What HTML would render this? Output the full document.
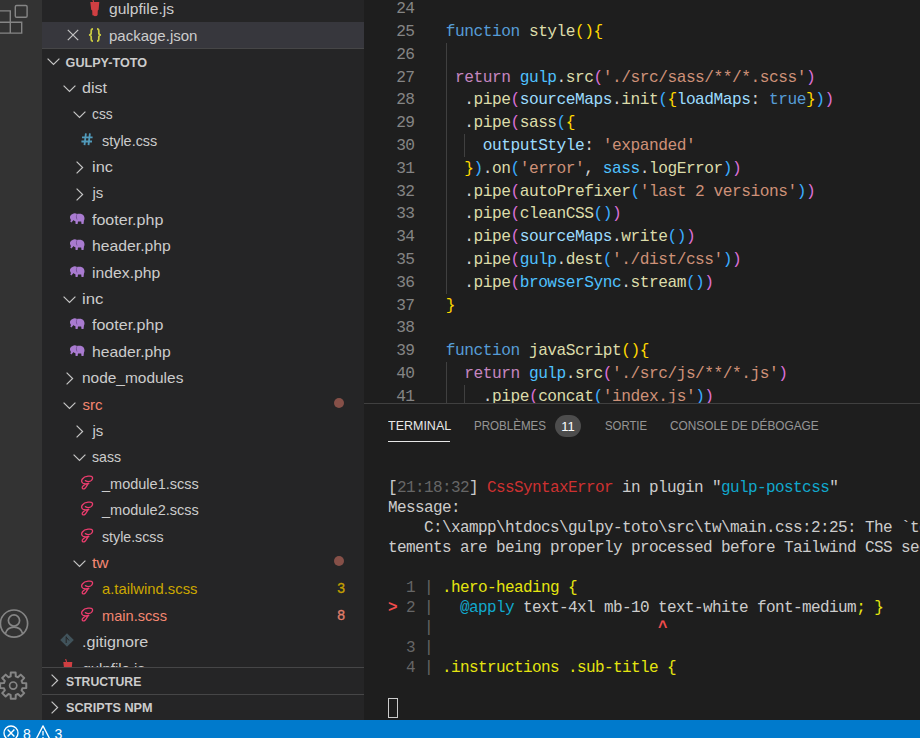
<!DOCTYPE html><html><head><meta charset="utf-8"><style>
*{margin:0;padding:0;box-sizing:border-box}
html,body{width:920px;height:738px;overflow:hidden;background:#1e1e1e}
body{position:relative;font-family:"Liberation Sans",sans-serif}
.abs{position:absolute}
#act{left:0;top:0;width:42px;height:720px;background:#333333;overflow:hidden}
#side{left:42px;top:0;width:322px;height:720px;background:#252526;overflow:hidden}
.row{position:absolute;left:0;width:322px;height:26.4px;font-size:15px;color:#cccccc;white-space:nowrap}
.t{position:absolute;top:1px;line-height:26.4px;white-space:nowrap}
.ic{position:absolute}
#editor{left:364px;top:0;width:556px;height:403px;background:#1e1e1e;overflow:hidden}
.ln{position:absolute;left:0;width:50.6px;text-align:right;color:#858585;font-family:"Liberation Mono",monospace;font-size:16.2px;letter-spacing:-0.48px;line-height:22.8px;height:22.8px;white-space:pre}
.cl{position:absolute;left:81.8px;font-family:"Liberation Mono",monospace;font-size:16.2px;letter-spacing:-0.48px;line-height:22.8px;height:22.8px;white-space:pre;color:#d4d4d4}
.ig{position:absolute;width:1px;background:#404040}
#panel{left:364px;top:403px;width:556px;height:317px;background:#1e1e1e;border-top:1px solid rgba(128,128,128,0.35);overflow:hidden}
.tab{position:absolute;top:0;font-size:13px;line-height:26px;color:rgba(231,231,231,0.6);white-space:nowrap}
.term{position:absolute;left:24px;font-family:"Liberation Mono",monospace;font-size:16px;letter-spacing:-0.6px;line-height:20px;height:20px;white-space:pre;color:#cccccc}
#status{left:0;top:720px;width:920px;height:18px;background:#007acc;overflow:hidden}
.k{color:#569cd6}.c{color:#c586c0}.f{color:#dcdcaa}.v{color:#9cdcfe}.o{color:#4fc1ff}.s{color:#ce9178}
.tw{color:#cccccc}.tg{color:#666666}.tr{color:#cd3131}.tR{color:#f14c4c;font-weight:bold}.tc{color:#11a8cd}.ty{color:#e5e510}
.b1{color:#ffd700}.b2{color:#da70d6}.b3{color:#3aacff}
</style></head><body>
<div id="act" class="abs"><svg class="ic" style="left:0;top:0" width="42" height="40" viewBox="0 0 42 40"><g fill="none" stroke="#858585" stroke-width="1.4"><rect x="15.3" y="5.5" width="11.8" height="11.8" rx="1.3"/><path d="M-2,10.9 L10.3,10.9 L10.3,22.3 L21.7,22.3 L21.7,33.1 L-2,33.1 M10.3,22.3 L10.3,33.1 M-2,22.3 L10.3,22.3"/></g></svg><svg class="ic" style="left:0;top:600px" width="42" height="110" viewBox="0 600 42 110"><g fill="none" stroke="#858585" stroke-width="1.7"><circle cx="14" cy="623.6" r="13.6"/><circle cx="14" cy="620.5" r="5.6"/><path d="M5.2,634 C6.5,629.5 10,627.2 14,627.2 C18,627.2 21.5,629.5 22.8,634"/><path d="M22.45,683.03 L26.28,683.18 L26.28,688.02 L22.45,688.17 L21.56,690.33 L24.16,693.13 L20.73,696.56 L17.93,693.96 L15.77,694.85 L15.62,698.68 L10.78,698.68 L10.63,694.85 L8.47,693.96 L5.67,696.56 L2.24,693.13 L4.84,690.33 L3.95,688.17 L0.12,688.02 L0.12,683.18 L3.95,683.03 L4.84,680.87 L2.24,678.07 L5.67,674.64 L8.47,677.24 L10.63,676.35 L10.78,672.52 L15.62,672.52 L15.77,676.35 L17.93,677.24 L20.73,674.64 L24.16,678.07 L21.56,680.87 Z" stroke-linejoin="round" stroke-width="2"/><circle cx="13.2" cy="685.6" r="3.6"/></g></svg></div>
<div id="side" class="abs">
<div class="row" style="top:-4.8px;"><span class="t" style="left:67px;transform:scaleX(1.04);transform-origin:0 0">gulpfile.js</span><svg class="ic" style="left:47.5px;top:3.8000000000000007px" width="10" height="18" viewBox="0 0 10 18"><path d="M2.6,0 L3.6,3" stroke="#cf3f42" stroke-width="1.1"/><path d="M0.3,3 L9.3,3 L8.6,10.8 L7.8,11.6 L7.6,16 C6.5,17.6 3.6,17.6 2.4,16 L2.2,11.6 L1.2,10.8 Z" fill="#cf3f42"/></svg></div>
<div class="row" style="top:21.6px;background:#37373d"><span class="t" style="left:67px">package.json</span><svg class="ic" style="left:25px;top:7.2px" width="12" height="12" viewBox="0 0 12 12"><path d="M0.8,0.8 L11.2,11.2 M11.2,0.8 L0.8,11.2" stroke="#c5c5c5" stroke-width="1.2"/></svg><svg class="ic" style="left:45.5px;top:6px" width="14" height="14" viewBox="0 0 14 14"><path d="M5,0.9 C3.6,0.9 3.2,1.5 3.2,3 L3.2,5 C3.2,6.1 2.4,6.9 1,7 C2.4,7.1 3.2,7.9 3.2,9 L3.2,11 C3.2,12.5 3.6,13.1 5,13.1 M9,0.9 C10.4,0.9 10.8,1.5 10.8,3 L10.8,5 C10.8,6.1 11.6,6.9 13,7 C11.6,7.1 10.8,7.9 10.8,9 L10.8,11 C10.8,12.5 10.4,13.1 9,13.1" fill="none" stroke="#cbcb41" stroke-width="1.7"/></svg></div>
<div class="abs" style="left:0;top:48px;width:322px;height:1px;background:rgba(204,204,204,0.2)"></div>
<div class="abs" style="left:0;top:0;width:322px;height:667px;overflow:hidden">
<div class="row" style="top:48.4px;"><span class="t" style="left:23.599999999999994px;font-weight:bold;font-size:12.6px;top:1.5px">GULPY-TOTO</span><svg class="ic" style="left:4.799999999999997px;top:9.8px" width="13" height="8" viewBox="0 0 13 8"><polyline points="0.6,0.6 6.5,6.5 12.4,0.6" fill="none" stroke="#c5c5c5" stroke-width="1.2"/></svg></div>
<div class="row" style="top:73.7px;"><span class="t" style="left:40.400000000000006px;color:#cccccc;transform:scaleX(1.074);transform-origin:0 0">dist</span><svg class="ic" style="left:20.5px;top:11.1px" width="13" height="8" viewBox="0 0 13 8"><polyline points="0.6,0.6 6.5,6.5 12.4,0.6" fill="none" stroke="#c5c5c5" stroke-width="1.2"/></svg></div>
<div class="row" style="top:100.1px;"><span class="t" style="left:50.400000000000006px;color:#cccccc;transform:scaleX(0.918);transform-origin:0 0">css</span><svg class="ic" style="left:30.5px;top:11.1px" width="13" height="8" viewBox="0 0 13 8"><polyline points="0.6,0.6 6.5,6.5 12.4,0.6" fill="none" stroke="#c5c5c5" stroke-width="1.2"/></svg></div>
<div class="row" style="top:126.5px;"><span class="t" style="left:60px;color:#cccccc;transform:scaleX(0.961);transform-origin:0 0">style.css</span><svg class="ic" style="left:38.5px;top:6.3999999999999995px" width="13" height="13" viewBox="0 0 13 13"><path d="M4.9,0.4 L3.5,12.2 M8.9,0.4 L7.5,12.2 M1,4.3 L11.6,4.3 M0.4,8.5 L11,8.5" fill="none" stroke="#519aba" stroke-width="1.8"/></svg></div>
<div class="row" style="top:152.89999999999998px;"><span class="t" style="left:50.400000000000006px;color:#cccccc;transform:scaleX(1.089);transform-origin:0 0">inc</span><svg class="ic" style="left:33.8px;top:8.399999999999999px" width="8" height="13" viewBox="0 0 8 13"><polyline points="0.6,0.6 6.6,6.5 0.6,12.4" fill="none" stroke="#c5c5c5" stroke-width="1.2"/></svg></div>
<div class="row" style="top:179.3px;"><span class="t" style="left:50.400000000000006px;color:#cccccc;transform:scaleX(1.000);transform-origin:0 0">js</span><svg class="ic" style="left:33.8px;top:8.399999999999999px" width="8" height="13" viewBox="0 0 8 13"><polyline points="0.6,0.6 6.6,6.5 0.6,12.4" fill="none" stroke="#c5c5c5" stroke-width="1.2"/></svg></div>
<div class="row" style="top:205.7px;"><span class="t" style="left:50.400000000000006px;color:#cccccc;transform:scaleX(1.069);transform-origin:0 0">footer.php</span><svg class="ic" style="left:27.400000000000006px;top:7.199999999999999px" width="16" height="12" viewBox="0 0 16 12"><path d="M3.5,1 C5,0 7,0.3 8,1 C9,0.6 11.5,0.5 13,1.2 C15,2 15.6,4 15.5,6 L15,7.5 L14.5,11 L12.5,11 L12.2,8.5 L9,8.5 L8.6,11 L6.6,11 L6.4,8.2 C5.5,8 4.8,7.6 4.5,7 C4,8 3,8.6 2.5,9.4 L1.2,8.6 C1.8,7.8 2.2,7 1.5,6 C0.6,4.6 0.8,2 3.5,1 Z" fill="#a97bd0"/><path d="M8,1.2 C7.2,2.5 7.2,5 8,6.5" fill="none" stroke="#6b4a8a" stroke-width="0.8"/></svg></div>
<div class="row" style="top:232.09999999999997px;"><span class="t" style="left:50.400000000000006px;color:#cccccc;transform:scaleX(1.050);transform-origin:0 0">header.php</span><svg class="ic" style="left:27.400000000000006px;top:7.199999999999999px" width="16" height="12" viewBox="0 0 16 12"><path d="M3.5,1 C5,0 7,0.3 8,1 C9,0.6 11.5,0.5 13,1.2 C15,2 15.6,4 15.5,6 L15,7.5 L14.5,11 L12.5,11 L12.2,8.5 L9,8.5 L8.6,11 L6.6,11 L6.4,8.2 C5.5,8 4.8,7.6 4.5,7 C4,8 3,8.6 2.5,9.4 L1.2,8.6 C1.8,7.8 2.2,7 1.5,6 C0.6,4.6 0.8,2 3.5,1 Z" fill="#a97bd0"/><path d="M8,1.2 C7.2,2.5 7.2,5 8,6.5" fill="none" stroke="#6b4a8a" stroke-width="0.8"/></svg></div>
<div class="row" style="top:258.5px;"><span class="t" style="left:50.400000000000006px;color:#cccccc;transform:scaleX(1.050);transform-origin:0 0">index.php</span><svg class="ic" style="left:27.400000000000006px;top:7.199999999999999px" width="16" height="12" viewBox="0 0 16 12"><path d="M3.5,1 C5,0 7,0.3 8,1 C9,0.6 11.5,0.5 13,1.2 C15,2 15.6,4 15.5,6 L15,7.5 L14.5,11 L12.5,11 L12.2,8.5 L9,8.5 L8.6,11 L6.6,11 L6.4,8.2 C5.5,8 4.8,7.6 4.5,7 C4,8 3,8.6 2.5,9.4 L1.2,8.6 C1.8,7.8 2.2,7 1.5,6 C0.6,4.6 0.8,2 3.5,1 Z" fill="#a97bd0"/><path d="M8,1.2 C7.2,2.5 7.2,5 8,6.5" fill="none" stroke="#6b4a8a" stroke-width="0.8"/></svg></div>
<div class="row" style="top:284.9px;"><span class="t" style="left:40.400000000000006px;color:#cccccc;transform:scaleX(1.117);transform-origin:0 0">inc</span><svg class="ic" style="left:20.5px;top:11.1px" width="13" height="8" viewBox="0 0 13 8"><polyline points="0.6,0.6 6.5,6.5 12.4,0.6" fill="none" stroke="#c5c5c5" stroke-width="1.2"/></svg></div>
<div class="row" style="top:311.3px;"><span class="t" style="left:50.400000000000006px;color:#cccccc;transform:scaleX(1.069);transform-origin:0 0">footer.php</span><svg class="ic" style="left:27.400000000000006px;top:7.199999999999999px" width="16" height="12" viewBox="0 0 16 12"><path d="M3.5,1 C5,0 7,0.3 8,1 C9,0.6 11.5,0.5 13,1.2 C15,2 15.6,4 15.5,6 L15,7.5 L14.5,11 L12.5,11 L12.2,8.5 L9,8.5 L8.6,11 L6.6,11 L6.4,8.2 C5.5,8 4.8,7.6 4.5,7 C4,8 3,8.6 2.5,9.4 L1.2,8.6 C1.8,7.8 2.2,7 1.5,6 C0.6,4.6 0.8,2 3.5,1 Z" fill="#a97bd0"/><path d="M8,1.2 C7.2,2.5 7.2,5 8,6.5" fill="none" stroke="#6b4a8a" stroke-width="0.8"/></svg></div>
<div class="row" style="top:337.7px;"><span class="t" style="left:50.400000000000006px;color:#cccccc;transform:scaleX(1.050);transform-origin:0 0">header.php</span><svg class="ic" style="left:27.400000000000006px;top:7.199999999999999px" width="16" height="12" viewBox="0 0 16 12"><path d="M3.5,1 C5,0 7,0.3 8,1 C9,0.6 11.5,0.5 13,1.2 C15,2 15.6,4 15.5,6 L15,7.5 L14.5,11 L12.5,11 L12.2,8.5 L9,8.5 L8.6,11 L6.6,11 L6.4,8.2 C5.5,8 4.8,7.6 4.5,7 C4,8 3,8.6 2.5,9.4 L1.2,8.6 C1.8,7.8 2.2,7 1.5,6 C0.6,4.6 0.8,2 3.5,1 Z" fill="#a97bd0"/><path d="M8,1.2 C7.2,2.5 7.2,5 8,6.5" fill="none" stroke="#6b4a8a" stroke-width="0.8"/></svg></div>
<div class="row" style="top:364.09999999999997px;"><span class="t" style="left:40.400000000000006px;color:#cccccc;transform:scaleX(1.030);transform-origin:0 0">node_modules</span><svg class="ic" style="left:23.8px;top:8.399999999999999px" width="8" height="13" viewBox="0 0 8 13"><polyline points="0.6,0.6 6.6,6.5 0.6,12.4" fill="none" stroke="#c5c5c5" stroke-width="1.2"/></svg></div>
<div class="row" style="top:390.49999999999994px;"><span class="t" style="left:40.400000000000006px;color:#f48771;transform:scaleX(1.000);transform-origin:0 0">src</span><svg class="ic" style="left:20.5px;top:11.1px" width="13" height="8" viewBox="0 0 13 8"><polyline points="0.6,0.6 6.5,6.5 12.4,0.6" fill="none" stroke="#c5c5c5" stroke-width="1.2"/></svg><div class="ic" style="left:292px;top:7.199999999999999px;width:10px;height:10px;border-radius:50%;background:rgb(134,80,72)"></div></div>
<div class="row" style="top:416.9px;"><span class="t" style="left:50.400000000000006px;color:#cccccc;transform:scaleX(1.000);transform-origin:0 0">js</span><svg class="ic" style="left:33.8px;top:8.399999999999999px" width="8" height="13" viewBox="0 0 8 13"><polyline points="0.6,0.6 6.6,6.5 0.6,12.4" fill="none" stroke="#c5c5c5" stroke-width="1.2"/></svg></div>
<div class="row" style="top:443.29999999999995px;"><span class="t" style="left:50.400000000000006px;color:#cccccc;transform:scaleX(0.940);transform-origin:0 0">sass</span><svg class="ic" style="left:30.5px;top:11.1px" width="13" height="8" viewBox="0 0 13 8"><polyline points="0.6,0.6 6.5,6.5 12.4,0.6" fill="none" stroke="#c5c5c5" stroke-width="1.2"/></svg></div>
<div class="row" style="top:469.7px;"><span class="t" style="left:60px;color:#cccccc;transform:scaleX(0.967);transform-origin:0 0">_module1.scss</span><svg class="ic" style="left:38px;top:5.199999999999999px" width="15" height="16" viewBox="0 0 15 16"><path d="M5.4,5.6 C7,6.6 9,6.8 10.6,6 C12.4,5 13,3 12.2,1.8 C11.4,0.8 9.5,1 8,1.2 C5.5,1.5 3.4,2.6 2.4,4 C1.4,5.4 1.6,7.2 3,8.2 C4.6,9.1 7,8.8 8.8,8.5 M8.2,8.7 C7.2,9.8 6.6,11.5 5.6,12.6 C4.8,13.7 3.4,14.4 2.6,13.6 C1.8,12.8 2.4,11.4 3.6,10.4 C4.8,9.4 6.5,8.8 8,8.6" fill="none" stroke="#ec3d6e" stroke-width="1.3" stroke-linecap="round"/></svg></div>
<div class="row" style="top:496.09999999999997px;"><span class="t" style="left:60px;color:#cccccc;transform:scaleX(0.967);transform-origin:0 0">_module2.scss</span><svg class="ic" style="left:38px;top:5.199999999999999px" width="15" height="16" viewBox="0 0 15 16"><path d="M5.4,5.6 C7,6.6 9,6.8 10.6,6 C12.4,5 13,3 12.2,1.8 C11.4,0.8 9.5,1 8,1.2 C5.5,1.5 3.4,2.6 2.4,4 C1.4,5.4 1.6,7.2 3,8.2 C4.6,9.1 7,8.8 8.8,8.5 M8.2,8.7 C7.2,9.8 6.6,11.5 5.6,12.6 C4.8,13.7 3.4,14.4 2.6,13.6 C1.8,12.8 2.4,11.4 3.6,10.4 C4.8,9.4 6.5,8.8 8,8.6" fill="none" stroke="#ec3d6e" stroke-width="1.3" stroke-linecap="round"/></svg></div>
<div class="row" style="top:522.5px;"><span class="t" style="left:60px;color:#cccccc;transform:scaleX(0.946);transform-origin:0 0">style.scss</span><svg class="ic" style="left:38px;top:5.199999999999999px" width="15" height="16" viewBox="0 0 15 16"><path d="M5.4,5.6 C7,6.6 9,6.8 10.6,6 C12.4,5 13,3 12.2,1.8 C11.4,0.8 9.5,1 8,1.2 C5.5,1.5 3.4,2.6 2.4,4 C1.4,5.4 1.6,7.2 3,8.2 C4.6,9.1 7,8.8 8.8,8.5 M8.2,8.7 C7.2,9.8 6.6,11.5 5.6,12.6 C4.8,13.7 3.4,14.4 2.6,13.6 C1.8,12.8 2.4,11.4 3.6,10.4 C4.8,9.4 6.5,8.8 8,8.6" fill="none" stroke="#ec3d6e" stroke-width="1.3" stroke-linecap="round"/></svg></div>
<div class="row" style="top:548.9px;"><span class="t" style="left:50.400000000000006px;color:#f48771;transform:scaleX(1.106);transform-origin:0 0">tw</span><svg class="ic" style="left:30.5px;top:11.1px" width="13" height="8" viewBox="0 0 13 8"><polyline points="0.6,0.6 6.5,6.5 12.4,0.6" fill="none" stroke="#c5c5c5" stroke-width="1.2"/></svg><div class="ic" style="left:292px;top:7.199999999999999px;width:10px;height:10px;border-radius:50%;background:rgb(134,80,72)"></div></div>
<div class="row" style="top:575.3px;"><span class="t" style="left:60px;color:#cca700;transform:scaleX(0.987);transform-origin:0 0">a.tailwind.scss</span><svg class="ic" style="left:38px;top:5.199999999999999px" width="15" height="16" viewBox="0 0 15 16"><path d="M5.4,5.6 C7,6.6 9,6.8 10.6,6 C12.4,5 13,3 12.2,1.8 C11.4,0.8 9.5,1 8,1.2 C5.5,1.5 3.4,2.6 2.4,4 C1.4,5.4 1.6,7.2 3,8.2 C4.6,9.1 7,8.8 8.8,8.5 M8.2,8.7 C7.2,9.8 6.6,11.5 5.6,12.6 C4.8,13.7 3.4,14.4 2.6,13.6 C1.8,12.8 2.4,11.4 3.6,10.4 C4.8,9.4 6.5,8.8 8,8.6" fill="none" stroke="#ec3d6e" stroke-width="1.3" stroke-linecap="round"/></svg><span class="t" style="left:295.3px;top:0px;color:#c4a000;font-size:14px;-webkit-text-stroke:0.3px #c4a000">3</span></div>
<div class="row" style="top:601.7px;"><span class="t" style="left:60px;color:#f48771;transform:scaleX(0.974);transform-origin:0 0">main.scss</span><svg class="ic" style="left:38px;top:5.199999999999999px" width="15" height="16" viewBox="0 0 15 16"><path d="M5.4,5.6 C7,6.6 9,6.8 10.6,6 C12.4,5 13,3 12.2,1.8 C11.4,0.8 9.5,1 8,1.2 C5.5,1.5 3.4,2.6 2.4,4 C1.4,5.4 1.6,7.2 3,8.2 C4.6,9.1 7,8.8 8.8,8.5 M8.2,8.7 C7.2,9.8 6.6,11.5 5.6,12.6 C4.8,13.7 3.4,14.4 2.6,13.6 C1.8,12.8 2.4,11.4 3.6,10.4 C4.8,9.4 6.5,8.8 8,8.6" fill="none" stroke="#ec3d6e" stroke-width="1.3" stroke-linecap="round"/></svg><span class="t" style="left:295.3px;top:0px;color:#e07f6c;font-size:14px;-webkit-text-stroke:0.3px #e07f6c">8</span></div>
<div class="row" style="top:628.1px;"><span class="t" style="left:40.400000000000006px;color:#cccccc;transform:scaleX(1.074);transform-origin:0 0">.gitignore</span><svg class="ic" style="left:17.900000000000006px;top:5.3999999999999995px" width="14" height="14" viewBox="0 0 14 14"><path d="M7,0.2 L13.8,7 L7,13.8 L0.2,7 Z" fill="#41535b"/><path d="M6.2,3.5 L6.2,10 M6.2,4 L9,7.5" fill="none" stroke="#252526" stroke-width="1"/></svg></div>
<div class="row" style="top:654.5px;"><span class="t" style="left:40.400000000000006px;color:#cccccc;transform:scaleX(1.000);transform-origin:0 0">gulpfile.js</span><svg class="ic" style="left:21.400000000000006px;top:4.199999999999999px" width="10" height="18" viewBox="0 0 10 18"><path d="M2.6,0 L3.6,3" stroke="#cf3f42" stroke-width="1.1"/><path d="M0.3,3 L9.3,3 L8.6,10.8 L7.8,11.6 L7.6,16 C6.5,17.6 3.6,17.6 2.4,16 L2.2,11.6 L1.2,10.8 Z" fill="#cf3f42"/></svg></div>
</div>
<div class="abs" style="left:0;top:667px;width:322px;height:1px;background:rgba(204,204,204,0.2)"></div>
<div class="row" style="top:667px;"><span class="t" style="left:23.599999999999994px;font-weight:bold;font-size:12.6px;top:1.5px;transform:scaleX(0.9701);transform-origin:0 0">STRUCTURE</span><svg class="ic" style="left:8.5px;top:6.9px" width="8" height="13" viewBox="0 0 8 13"><polyline points="0.6,0.6 6.6,6.5 0.6,12.4" fill="none" stroke="#c5c5c5" stroke-width="1.2"/></svg></div>
<div class="abs" style="left:0;top:693.8px;width:322px;height:1px;background:rgba(204,204,204,0.2)"></div>
<div class="row" style="top:693.8px;"><span class="t" style="left:23.599999999999994px;font-weight:bold;font-size:12.6px;top:1.5px;transform:scaleX(1.0058);transform-origin:0 0">SCRIPTS NPM</span><svg class="ic" style="left:8.5px;top:6.9px" width="8" height="13" viewBox="0 0 8 13"><polyline points="0.6,0.6 6.6,6.5 0.6,12.4" fill="none" stroke="#c5c5c5" stroke-width="1.2"/></svg></div>
</div>
<div id="editor" class="abs">
<div class="ln" style="top:-1.7999999999999998px">24</div>
<div class="ln" style="top:21.0px">25</div>
<div class="cl" style="top:21.0px"><span class="k">function</span> <span class="f">style</span><span class="b1">(){</span></div>
<div class="ln" style="top:43.800000000000004px">26</div>
<div class="ln" style="top:66.60000000000001px">27</div>
<div class="cl" style="top:66.60000000000001px"> <span class="c">return</span> <span class="o">gulp</span>.<span class="f">src</span><span class="b2">(</span><span class="s">&#x27;./src/sass/**/*.scss&#x27;</span><span class="b2">)</span></div>
<div class="ln" style="top:89.4px">28</div>
<div class="cl" style="top:89.4px">  .<span class="f">pipe</span><span class="b2">(</span><span class="v">sourceMaps</span>.<span class="f">init</span><span class="b3">(</span><span class="b1">{</span><span class="v">loadMaps</span>: <span class="k">true</span><span class="b1">}</span><span class="b3">)</span><span class="b2">)</span></div>
<div class="ln" style="top:112.2px">29</div>
<div class="cl" style="top:112.2px">  .<span class="f">pipe</span><span class="b2">(</span><span class="f">sass</span><span class="b3">(</span><span class="b1">{</span></div>
<div class="ln" style="top:135.0px">30</div>
<div class="cl" style="top:135.0px">    <span class="v">outputStyle</span>: <span class="s">&#x27;expanded&#x27;</span></div>
<div class="ln" style="top:157.79999999999998px">31</div>
<div class="cl" style="top:157.79999999999998px">  <span class="b1">}</span><span class="b3">)</span>.<span class="f">on</span><span class="b3">(</span><span class="s">&#x27;error&#x27;</span>, <span class="o">sass</span>.<span class="f">logError</span><span class="b3">)</span><span class="b2">)</span></div>
<div class="ln" style="top:180.6px">32</div>
<div class="cl" style="top:180.6px">  .<span class="f">pipe</span><span class="b2">(</span><span class="f">autoPrefixer</span><span class="b3">(</span><span class="s">&#x27;last 2 versions&#x27;</span><span class="b3">)</span><span class="b2">)</span></div>
<div class="ln" style="top:203.4px">33</div>
<div class="cl" style="top:203.4px">  .<span class="f">pipe</span><span class="b2">(</span><span class="f">cleanCSS</span><span class="b3">()</span><span class="b2">)</span></div>
<div class="ln" style="top:226.2px">34</div>
<div class="cl" style="top:226.2px">  .<span class="f">pipe</span><span class="b2">(</span><span class="v">sourceMaps</span>.<span class="f">write</span><span class="b3">()</span><span class="b2">)</span></div>
<div class="ln" style="top:249.0px">35</div>
<div class="cl" style="top:249.0px">  .<span class="f">pipe</span><span class="b2">(</span><span class="o">gulp</span>.<span class="f">dest</span><span class="b3">(</span><span class="s">&#x27;./dist/css&#x27;</span><span class="b3">)</span><span class="b2">)</span></div>
<div class="ln" style="top:271.8px">36</div>
<div class="cl" style="top:271.8px">  .<span class="f">pipe</span><span class="b2">(</span><span class="o">browserSync</span>.<span class="f">stream</span><span class="b3">()</span><span class="b2">)</span></div>
<div class="ln" style="top:294.6px">37</div>
<div class="cl" style="top:294.6px"><span class="b1">}</span></div>
<div class="ln" style="top:317.4px">38</div>
<div class="ln" style="top:340.2px">39</div>
<div class="cl" style="top:340.2px"><span class="k">function</span> <span class="f">javaScript</span><span class="b1">(){</span></div>
<div class="ln" style="top:363.0px">40</div>
<div class="cl" style="top:363.0px">  <span class="c">return</span> <span class="o">gulp</span>.<span class="f">src</span><span class="b2">(</span><span class="s">&#x27;./src/js/**/*.js&#x27;</span><span class="b2">)</span></div>
<div class="ln" style="top:385.8px">41</div>
<div class="cl" style="top:385.8px">    .<span class="f">pipe</span><span class="b2">(</span><span class="f">concat</span><span class="b3">(</span><span class="s">&#x27;index.js&#x27;</span><span class="b3">)</span><span class="b2">)</span></div>
<div class="ig" style="left:82px;top:42.800000000000004px;height:250.8px"></div>
<div class="ig" style="left:100px;top:134.0px;height:22.8px"></div>
<div class="ig" style="left:82px;top:362.0px;height:45.6px"></div>
<div class="ig" style="left:100px;top:384.8px;height:22.8px"></div>
</div>
<div id="panel" class="abs">
<span class="tab" style="left:24.0px;top:9px;color:#e7e7e7;transform:scaleX(0.9608);transform-origin:0 0">TERMINAL</span>
<div class="abs" style="left:24px;top:37px;width:62px;height:1px;background:#e7e7e7"></div>
<span class="tab" style="left:109.5px;top:9px;color:rgba(231,231,231,0.6);transform:scaleX(0.8907);transform-origin:0 0">PROBLÈMES</span>
<div class="abs" style="left:191px;top:11px;width:26px;height:22.4px;border-radius:11.2px;background:#4d4d4d"></div>
<span class="abs" style="left:197.20000000000005px;top:10px;font-size:13px;line-height:26px;color:#ffffff">11</span>
<span class="tab" style="left:240.5px;top:9px;color:rgba(231,231,231,0.6);transform:scaleX(0.8731);transform-origin:0 0">SORTIE</span>
<span class="tab" style="left:305.9px;top:9px;color:rgba(231,231,231,0.6);transform:scaleX(0.9108);transform-origin:0 0">CONSOLE DE DÉBOGAGE</span>
<div class="term" style="top:73.60000000000002px"><span class="tw">[</span><span class="tg">21:18:32</span><span class="tw">] </span><span class="tr">CssSyntaxError</span><span class="tw"> in plugin &quot;</span><span class="tc">gulp-postcss</span><span class="tw">&quot;</span></div>
<div class="term" style="top:93.60000000000002px"><span class="tw">Message:</span></div>
<div class="term" style="top:113.60000000000002px"><span class="tw">    C:\xampp\htdocs\gulpy-toto\src\tw\main.css:2:25: The `text-4xl` class</span></div>
<div class="term" style="top:133.60000000000002px"><span class="tw">tements are being properly processed before Tailwind CSS sees your CSS</span></div>
<div class="term" style="top:173.60000000000002px"><span class="tg">  1 | </span><span class="ty">.hero-heading {</span></div>
<div class="term" style="top:193.60000000000002px"><span class="tR">&gt;</span><span class="tg"> 2 | </span>  <span class="tc">@apply</span><span class="tw"> text-4xl mb-10 text-white font-medium</span><span class="ty">; }</span></div>
<div class="term" style="top:213.60000000000002px"><span class="tg">    | </span><span class="tR">                        ^</span></div>
<div class="term" style="top:233.60000000000002px"><span class="tg">  3 | </span></div>
<div class="term" style="top:253.60000000000002px"><span class="tg">  4 | </span><span class="ty">.instructions .sub-title {</span></div>
<div class="abs" style="left:24px;top:294px;width:9.5px;height:20px;border:1px solid #cccccc"></div>
</div>
<div id="status" class="abs">
<svg class="ic" style="left:3px;top:4.5px" width="16" height="16" viewBox="0 0 16 16"><circle cx="8" cy="8" r="7" fill="none" stroke="#fff" stroke-width="1.3"/><path d="M4.6,4.6 L11.4,11.4 M11.4,4.6 L4.6,11.4" stroke="#fff" stroke-width="1.4"/></svg>
<span class="abs" style="left:23px;top:5.5px;font-size:14px;line-height:16px;color:#fff">8</span>
<svg class="ic" style="left:35px;top:4.5px" width="16" height="16" viewBox="0 0 16 16"><path d="M8,0.9 L15.3,15 L0.7,15 Z" fill="none" stroke="#fff" stroke-width="1.3" stroke-linejoin="round"/><path d="M8,6 L8,10.5 M8,12 L8,13" stroke="#fff" stroke-width="1.3"/></svg>
<span class="abs" style="left:54.5px;top:5.5px;font-size:14px;line-height:16px;color:#fff">3</span>
</div>
</body></html>
